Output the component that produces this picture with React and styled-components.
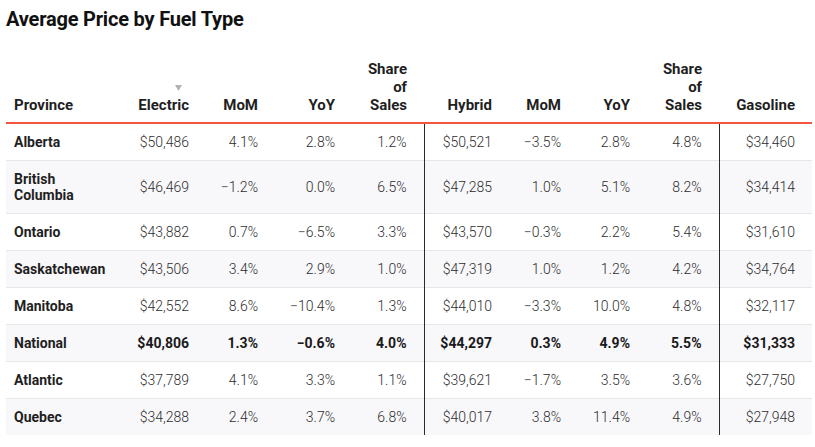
import React from "react";
import styled, { createGlobalStyle } from "styled-components";

const Global = createGlobalStyle`
  html, body { margin: 0; padding: 0; background: #fff; }
  body { font-family: Roboto, "Liberation Sans", Arial, sans-serif; }
`;

const Page = styled.div`
  padding: 7px 6px 0 6px;
  width: 806px;
`;

const Title = styled.h1`
  margin: 0 0 21px 0;
  font-size: 20px;
  line-height: 24px;
  font-weight: 700;
  letter-spacing: -0.2px;
  color: #111;
`;

const Table = styled.table`
  width: 806px;
  border-collapse: collapse;
  table-layout: fixed;
  font-size: 14px;
`;

const HeadCell = styled.th`
  vertical-align: bottom;
  text-align: ${(p) => (p.$left ? "left" : "right")};
  padding: 8px ${(p) => (p.$left ? "8px" : "17px")} 8px 8px;
  font-size: 15px;
  font-weight: 700;
  line-height: 18px;
  color: #1f1f1f;
  border-bottom: 2px solid #f4553f;
`;

const SortMark = styled.svg`
  display: block;
  margin: 0 7px 5px auto;
`;

const Row = styled.tr`
  background: ${(p) => (p.$striped ? "#f8f7fa" : "#fff")};
  border-bottom: ${(p) => (p.$last ? "none" : "1px solid #e7e6eb")};
`;

const NameCell = styled.td`
  padding: 10px 8px;
  line-height: 16px;
  font-weight: 700;
  color: #1f1f1f;
  text-align: left;
`;

const NumCell = styled.td`
  padding: 10px 17px 10px 4px;
  line-height: 16px;
  text-align: right;
  white-space: nowrap;
  color: ${(p) => (p.$bold ? "#1a1a1a" : "#2e2e2e")};
  font-weight: ${(p) => (p.$bold ? 700 : 300)};
  border-left: ${(p) => (p.$divider ? "1px solid #2a2a2a" : "none")};
`;

const widths = [112, 88, 69, 77, 72, 85, 69, 69, 72, 93];

const headers = [
  { label: "Province", left: true },
  { label: "Electric", sort: true },
  { label: "MoM" },
  { label: "YoY" },
  { label: ["Share", "of", "Sales"] },
  { label: "Hybrid" },
  { label: "MoM" },
  { label: "YoY" },
  { label: ["Share", "of", "Sales"] },
  { label: "Gasoline" },
];

const rows = [
  ["Alberta", "$50,486", "4.1%", "2.8%", "1.2%", "$50,521", "−3.5%", "2.8%", "4.8%", "$34,460"],
  ["British Columbia", "$46,469", "−1.2%", "0.0%", "6.5%", "$47,285", "1.0%", "5.1%", "8.2%", "$34,414"],
  ["Ontario", "$43,882", "0.7%", "−6.5%", "3.3%", "$43,570", "−0.3%", "2.2%", "5.4%", "$31,610"],
  ["Saskatchewan", "$43,506", "3.4%", "2.9%", "1.0%", "$47,319", "1.0%", "1.2%", "4.2%", "$34,764"],
  ["Manitoba", "$42,552", "8.6%", "−10.4%", "1.3%", "$44,010", "−3.3%", "10.0%", "4.8%", "$32,117"],
  ["National", "$40,806", "1.3%", "−0.6%", "4.0%", "$44,297", "0.3%", "4.9%", "5.5%", "$31,333"],
  ["Atlantic", "$37,789", "4.1%", "3.3%", "1.1%", "$39,621", "−1.7%", "3.5%", "3.6%", "$27,750"],
  ["Quebec", "$34,288", "2.4%", "3.7%", "6.8%", "$40,017", "3.8%", "11.4%", "4.9%", "$27,948"],
];

const dividers = new Set([5, 9]);

export default function App() {
  return (
    <>
      <Global />
      <Page>
        <Title>Average Price by Fuel Type</Title>
        <Table>
          <colgroup>
            {widths.map((w, i) => (
              <col key={i} style={{ width: w }} />
            ))}
          </colgroup>
          <thead>
            <tr>
              {headers.map((h, i) => (
                <HeadCell key={i} $left={h.left}>
                  {h.sort && (
                    <SortMark width="7" height="6" viewBox="0 0 7 6">
                      <path d="M0 0 H7 L3.5 6 Z" fill="#b3b3b3" />
                    </SortMark>
                  )}
                  {Array.isArray(h.label)
                    ? h.label.map((l, j) => (
                        <React.Fragment key={j}>
                          {l}
                          {j < h.label.length - 1 && <br />}
                        </React.Fragment>
                      ))
                    : h.label}
                </HeadCell>
              ))}
            </tr>
          </thead>
          <tbody>
            {rows.map((r, ri) => {
              const bold = r[0] === "National";
              return (
                <Row key={ri} $striped={ri % 2 === 1} $last={ri === rows.length - 1}>
                  <NameCell>{r[0]}</NameCell>
                  {r.slice(1).map((v, ci) => (
                    <NumCell key={ci} $bold={bold} $divider={dividers.has(ci + 1)}>
                      {v}
                    </NumCell>
                  ))}
                </Row>
              );
            })}
          </tbody>
        </Table>
      </Page>
    </>
  );
}
